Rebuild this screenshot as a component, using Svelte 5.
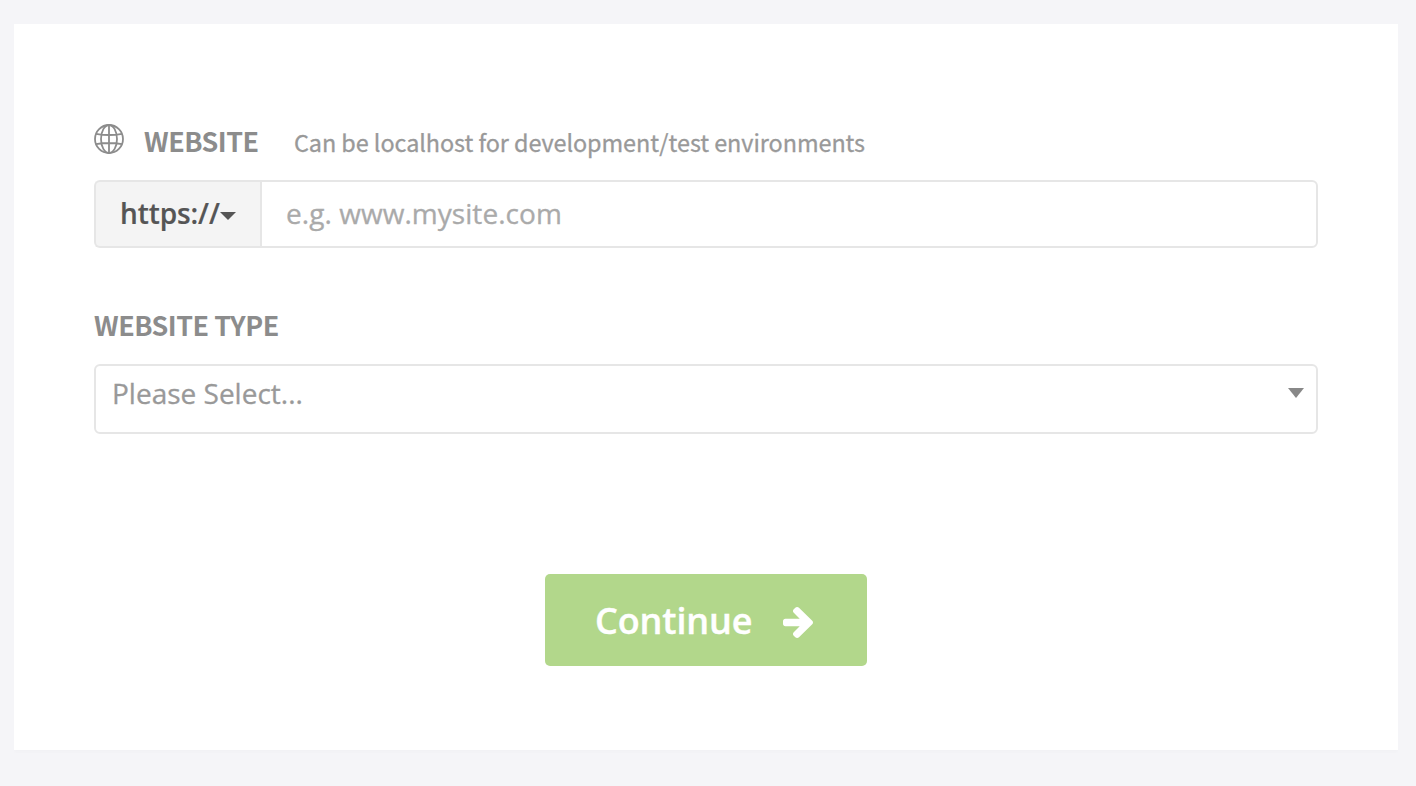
<script>
  let site = $state('');
</script>

<main class="page">
  <form class="card" onsubmit={(e) => e.preventDefault()}>
    <div class="label-row">
      <svg class="globe" viewBox="0 0 30 30" fill="none" stroke="#8c8c8c" stroke-width="1.8">
        <circle cx="15" cy="15" r="14" />
        <ellipse cx="15" cy="15" rx="8" ry="14" />
        <path d="M15 1v28M2 9.8Q15 12.2 28 9.8M2 20.2Q15 17.8 28 20.2" />
      </svg>
      <label class="label" for="site"><span>WEBSITE</span></label>
      <span class="hint"><span>Can be localhost for development/test environments</span></span>
    </div>
    <div class="group">
      <button class="scheme" type="button">
        <span>https://</span><svg class="caret" viewBox="0 0 16 8"><path d="M0 0h16L8 8z" fill="#555" /></svg>
      </button>
      <input id="site" bind:value={site} placeholder="e.g. www.mysite.com" />
    </div>
    <div class="label type"><span>WEBSITE TYPE</span></div>
    <div class="select">
      <span>Please Select...</span>
      <svg class="down" viewBox="0 0 16 10"><path d="M0 0h16L8 10z" fill="#888" /></svg>
    </div>
    <button class="continue" type="submit">
      <span>Continue</span>
      <svg class="arrow" viewBox="128 181 1472 1558" preserveAspectRatio="none" fill="#fff">
        <path d="M1600 960q0 54-37 91l-651 651q-39 37-91 37-51 0-90-37l-75-75q-38-38-38-91t38-91l293-293h-704q-52 0-84.5-37.5t-32.5-90.5v-128q0-53 32.5-90.5t84.5-37.5h704l-293-294q-38-36-38-90t38-90l75-75q38-38 90-38 53 0 91 38l651 651q37 35 37 90z" />
      </svg>
    </button>
  </form>
</main>

<style>
  :global(body) { background: #f5f5f8; }
  .page {
    box-sizing: border-box;
    height: 786px;
    padding: 24px 18px 36px 14px;
    font-family: "Open Sans", sans-serif;
  }
  .card {
    box-sizing: border-box;
    height: 726px;
    padding: 96px 80px 0;
    background: #fff;
    box-shadow: 0 3px 2px rgba(0, 0, 0, 0.01);
    display: flex;
    flex-direction: column;
  }
  .label-row { display: flex; height: 44px; align-items: flex-start; }
  .globe { width: 30px; height: 30px; margin-top: 4px; flex: none; }
  .label {
    font: 700 26.9px/42px "Noto Sans CJK SC", sans-serif;
    letter-spacing: -0.47px;
    color: #8c8c8c;
    white-space: nowrap;
  }
  .label-row .label { margin-left: 20px; width: 150px; }
  .hint {
    font: 400 23.4px/44px "Noto Sans CJK SC", sans-serif;
    letter-spacing: -0.06px;
    color: #999;
    -webkit-text-stroke: 0.3px #999;
    white-space: nowrap;
  }
  .group { display: flex; height: 68px; margin-top: 16px; }
  .scheme {
    box-sizing: border-box;
    width: 166px;
    padding: 0 0 0 24px;
    border: 2px solid #e6e6e6;
    border-right: 0;
    border-radius: 6px 0 0 6px;
    background: #f4f4f4;
    color: #555;
    font: 600 28px/62px "Open Sans", sans-serif;
    letter-spacing: -0.1px;
    -webkit-text-stroke: 0.2px #555;
    display: flex;
    align-items: flex-start;
  }
  .caret { width: 16px; height: 8px; margin-top: 30px; }
  input {
    box-sizing: border-box;
    flex: 1;
    min-width: 0;
    padding: 0 24px 2px;
    border: 2px solid #e6e6e6;
    border-radius: 0 6px 6px 0;
    background: #fff;
    color: #555;
    outline: none;
    font: 400 28px/62px "Open Sans", sans-serif;
    letter-spacing: 0.05px;
  }
  input::placeholder { color: #aaa; opacity: 1; -webkit-text-stroke: 0.3px #aaa; }
  .type { height: 44px; margin-top: 56px; }
  .select {
    box-sizing: border-box;
    height: 70px;
    margin-top: 16px;
    padding: 0 12px 0 16px;
    border: 2px solid #e6e6e6;
    border-radius: 6px;
    color: #999;
    font-size: 28px;
    line-height: 54px;
    -webkit-text-stroke: 0.3px #999;
    display: flex;
    justify-content: space-between;
    align-items: flex-start;
  }
  .down { width: 16px; height: 10px; margin-top: 22px; }
  .continue {
    box-sizing: border-box;
    width: 322px;
    height: 92px;
    margin: 140px auto 0;
    padding: 0 54px 0 50px;
    border: 0;
    border-radius: 5px;
    background: #b2d78b;
    color: #fff;
    font: 600 36px/94px "Open Sans", sans-serif;
    letter-spacing: -0.12px;
    -webkit-text-stroke: 0.4px #fff;
    display: flex;
    justify-content: space-between;
    align-items: flex-start;
  }
  .arrow { width: 30px; height: 31px; margin-top: 33px; }
</style>
